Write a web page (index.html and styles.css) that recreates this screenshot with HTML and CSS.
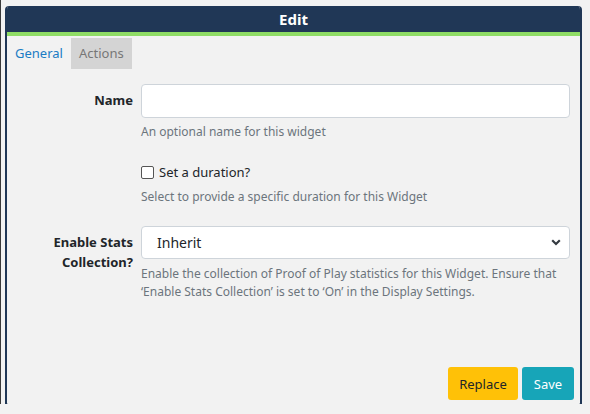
FILE: index.html
```html
<!DOCTYPE html>
<html>
<head>
<meta charset="utf-8">
<link rel="stylesheet" href="styles.css">
</head>
<body>
<div class="page">
  <div class="panel">
    <div class="panel-header">Edit</div>
    <div class="panel-body">
      <div class="tabs">
        <div class="tab active">General</div>
        <div class="tab muted">Actions</div>
      </div>
      <div class="form">
        <div class="row row-name">
          <label class="label">Name</label>
          <div class="control">
            <input class="input" type="text">
            <div class="help">An optional name for this widget</div>
          </div>
        </div>
        <div class="row row-check">
          <div class="label"></div>
          <div class="control">
            <label class="check"><span class="box"></span>Set a duration?</label>
            <div class="help">Select to provide a specific duration for this Widget</div>
          </div>
        </div>
        <div class="row row-select">
          <label class="label">Enable Stats Collection?</label>
          <div class="control">
            <div class="select">
              <span>Inherit</span>
              <svg class="chev" width="10" height="7" viewBox="0 0 10 7"><path d="M1.2 1.3 L5 5 L8.8 1.3" fill="none" stroke="#343a40" stroke-width="2.2"/></svg>
            </div>
            <div class="help">Enable the collection of Proof of Play statistics for this Widget. Ensure that ‘Enable Stats Collection’ is set to ‘On’ in the Display Settings.</div>
          </div>
        </div>
      </div>
      <div class="footer">
        <button class="btn btn-warning">Replace</button>
        <button class="btn btn-info">Save</button>
      </div>
    </div>
  </div>
</div>
</body>
</html>
```
FILE: styles.css
```css
html, body {
  margin: 0;
  padding: 0;
  background: #f2f2f2;
  font-family: "Noto Sans", "Open Sans", sans-serif;
  color: #212529;
}
.page {
  width: 590px;
  box-sizing: border-box;
  border-left: 1px solid #3a3a3a;
  padding: 6px 0 0 4px;
  height: 404px;
}
.panel {
  width: 577px;
  height: 400px;
  box-sizing: border-box;
  border: 2px solid #203756;
  border-top: none;
  border-radius: 4px 4px 3px 3px;
  background: #f2f2f2;
  display: flex;
  flex-direction: column;
  overflow: hidden;
}
.panel-header {
  background: #203756;
  color: #fff;
  font-weight: 700;
  font-size: 15px;
  height: 26px;
  line-height: 26px;
  text-align: center;
  border-bottom: 4px solid #8fdc65;
  margin: 0 -2px;
}
.panel-body {
  flex: 1;
  display: flex;
  flex-direction: column;
  padding: 2px 0 4px 0;
}
.tabs {
  display: flex;
  height: 31px;
}
.tab {
  padding: 0 8px;
  line-height: 31px;
  font-size: 13px;
}
.tab.active { color: #1b7cc4; }
.tab.muted { color: #777; background: #d4d4d4; }
.form {
  display: flex;
  flex-direction: column;
  padding-right: 10px;
}
.row {
  display: grid;
  grid-template-columns: 126px 1fr;
  column-gap: 8px;
}
.label {
  text-align: right;
  font-weight: 700;
  font-size: 13px;
  line-height: 20px;
  padding-top: 6px;
}
.row-name { margin-top: 15px; }
.row-name .label { padding-top: 6px; }
.input {
  display: block;
  box-sizing: border-box;
  width: 100%;
  height: 34px;
  border: 1px solid #ced4da;
  border-radius: 4px;
  background: #fff;
  margin: 0;
}
.help {
  font-size: 12px;
  line-height: 18px;
  color: #6c757d;
  margin-top: 5px;
}
.row-check { margin-top: 21px; }
.check {
  display: flex;
  align-items: center;
  font-size: 13px;
  line-height: 20px;
}
.box {
  width: 11px;
  height: 11px;
  border: 1px solid #555;
  border-radius: 2px;
  background: #fff;
  margin-right: 5px;
}
.row-check .help { margin-top: 6px; }
.row-select { margin-top: 20px; }
.row-select .label { padding-top: 6px; }
.select {
  position: relative;
  box-sizing: border-box;
  height: 33px;
  border: 1px solid #ced4da;
  border-radius: 4px;
  background: #fff;
  font-size: 14px;
  line-height: 31px;
  padding-left: 15px;
}
.chev {
  position: absolute;
  right: 8px;
  top: 12px;
}
.row-select .help { margin-top: 6px; }
.footer {
  margin-top: auto;
  display: flex;
  justify-content: flex-end;
  gap: 4px;
  padding-right: 6px;
}
.btn {
  font-family: inherit;
  font-size: 13px;
  height: 33px;
  border: none;
  border-radius: 3px;
  padding: 0 11px;
}
.btn-warning { background: #ffc107; color: #212529; width: 70px; }
.btn-info { background: #17a5b8; color: #fff; width: 52px; }
```
